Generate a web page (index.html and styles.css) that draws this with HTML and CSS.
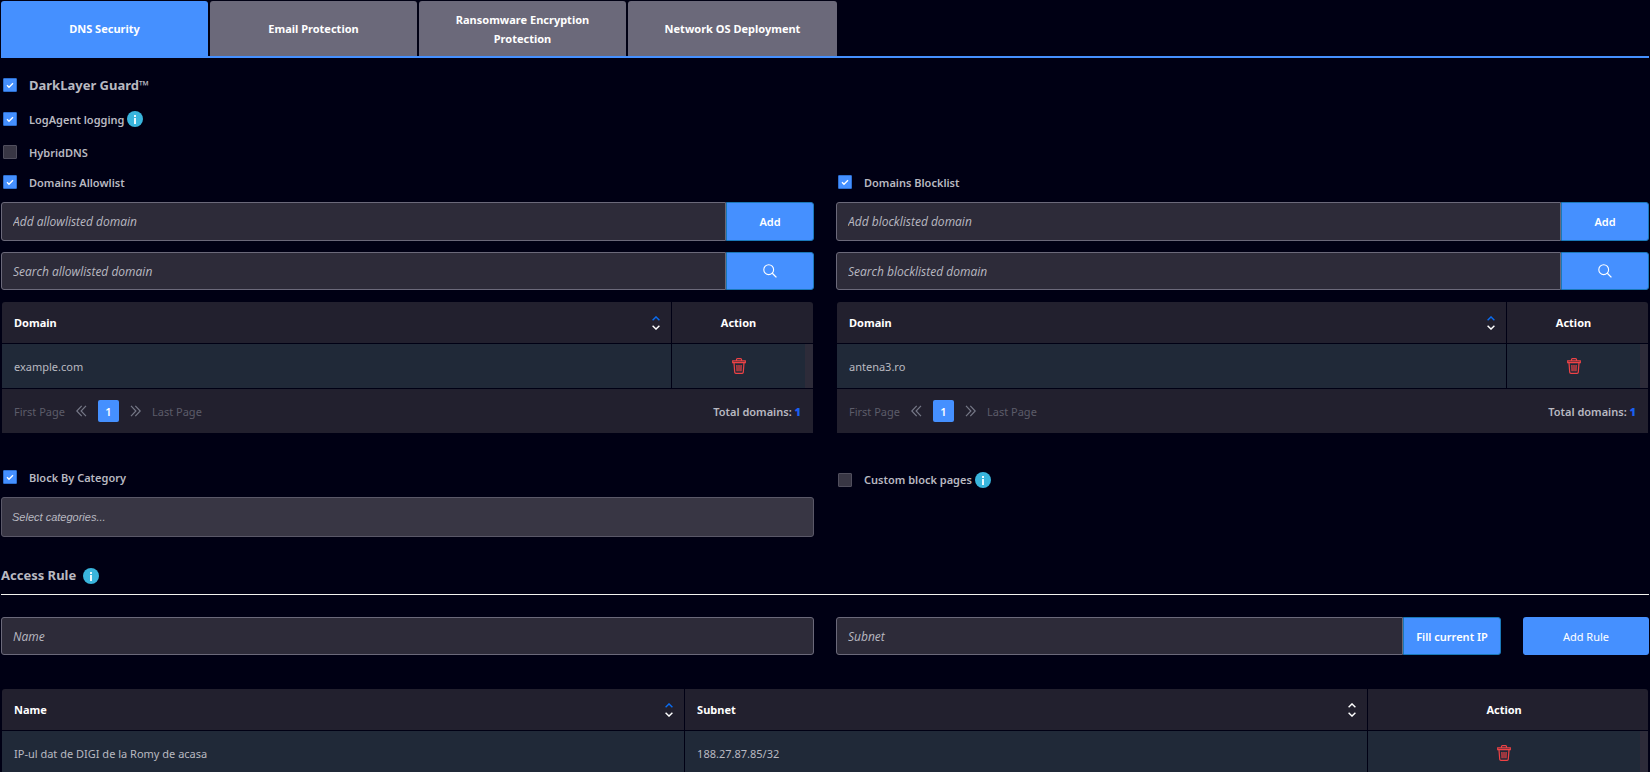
FILE: index.html
```html
<!DOCTYPE html>
<html lang="en">
<head>
    <meta charset="UTF-8">
    <meta name="viewport" content="width=device-width, initial-scale=1.0">
    <title>DNS Security</title>
    <link rel="stylesheet" href="styles.css">
</head>
<body>

    <!-- Shared icons -->
    <svg class="icon-defs" aria-hidden="true">
        <symbol id="icon-info" viewBox="0 0 16 16">
            <circle cx="8" cy="8" r="8" fill="#39b5dd"/>
            <path d="M7 4h2v2H7zM7 7h2v6H7z" fill="#e8f8fd"/>
        </symbol>
        <symbol id="icon-search" viewBox="0 0 14 14">
            <circle cx="5.7" cy="5.7" r="4.9" fill="none" stroke="#fff" stroke-width="1.1"/>
            <path d="M9.3 9.3l4.1 4.1" stroke="#fff" stroke-width="1.3"/>
        </symbol>
        <symbol id="icon-trash" viewBox="0 0 14 16">
            <path d="M4.5 2.8V1.6q0-.9.9-.9h3.2q.9 0 .9.9v1.2M.7 2.9h12.6v1.8H.7zM2 4.8l.7 9.3q.1 1.2 1.2 1.2h6.2q1.1 0 1.2-1.2l.7-9.3M4.9 7l.2 6.2M7 7v6.2M9.1 7l-.2 6.2" fill="none" stroke="#ef4245" stroke-width="1.2"/>
        </symbol>
        <symbol id="icon-prev" viewBox="0 0 11 12">
            <path d="M5.7.8L.8 6l4.9 5.2M10 .8L5.1 6l4.9 5.2" fill="none" stroke="#767887" stroke-width="1.2"/>
        </symbol>
        <symbol id="icon-next" viewBox="0 0 11 12">
            <path d="M1 .8L5.9 6 1 11.2M5.3.8l4.9 5.2-4.9 5.2" fill="none" stroke="#767887" stroke-width="1.2"/>
        </symbol>
        <symbol id="icon-sort" viewBox="0 0 8 14">
            <path class="sort-up" d="M.6 4.2L4 .9l3.4 3.3" fill="none" stroke="currentColor" stroke-width="1.4"/>
            <path d="M.6 9.8L4 13.1l3.4-3.3" fill="none" stroke="#fff" stroke-width="1.4"/>
        </symbol>
    </svg>

    <!-- Tabs -->
    <nav class="tabs">
        <button class="tab active" type="button">DNS Security</button>
        <button class="tab" type="button">Email Protection</button>
        <button class="tab" type="button">Ransomware Encryption Protection</button>
        <button class="tab" type="button">Network OS Deployment</button>
    </nav>

    <main>
        <!-- Main switches -->
        <div class="options">
            <div class="option option-title">
                <input type="checkbox" id="darklayer" checked>
                <label for="darklayer">DarkLayer Guard™</label>
            </div>
            <div class="option">
                <input type="checkbox" id="logagent" checked>
                <label for="logagent">LogAgent logging</label>
                <svg class="info"><use href="#icon-info"/></svg>
            </div>
            <div class="option">
                <input type="checkbox" id="hybriddns">
                <label for="hybriddns">HybridDNS</label>
            </div>
        </div>

        <!-- Allowlist and blocklist -->
        <div class="columns">
            <section>
                <div class="option">
                    <input type="checkbox" id="allowlist" checked>
                    <label for="allowlist">Domains Allowlist</label>
                </div>
                <div class="input-group input-add">
                    <input type="text" placeholder="Add allowlisted domain" aria-label="Add allowlisted domain">
                    <button type="button">Add</button>
                </div>
                <div class="input-group">
                    <input type="text" placeholder="Search allowlisted domain" aria-label="Search allowlisted domain">
                    <button type="button" aria-label="Search"><svg class="search"><use href="#icon-search"/></svg></button>
                </div>
                <div class="table-box">
                    <table class="domains">
                        <thead>
                            <tr>
                                <th><div class="sortable">Domain <svg class="sort sorted"><use href="#icon-sort"/></svg></div></th>
                                <th class="action">Action</th>
                            </tr>
                        </thead>
                        <tbody>
                            <tr>
                                <td>example.com</td>
                                <td class="action"><button class="delete" type="button" aria-label="Delete"><svg><use href="#icon-trash"/></svg></button></td>
                            </tr>
                        </tbody>
                    </table>
                    <div class="pager">
                        <button type="button">First Page</button>
                        <button type="button" aria-label="Previous"><svg><use href="#icon-prev"/></svg></button>
                        <button class="current" type="button">1</button>
                        <button type="button" aria-label="Next"><svg><use href="#icon-next"/></svg></button>
                        <button type="button">Last Page</button>
                        <span class="total">Total domains: <b>1</b></span>
                    </div>
                </div>
            </section>

            <section>
                <div class="option">
                    <input type="checkbox" id="blocklist" checked>
                    <label for="blocklist">Domains Blocklist</label>
                </div>
                <div class="input-group input-add">
                    <input type="text" placeholder="Add blocklisted domain" aria-label="Add blocklisted domain">
                    <button type="button">Add</button>
                </div>
                <div class="input-group">
                    <input type="text" placeholder="Search blocklisted domain" aria-label="Search blocklisted domain">
                    <button type="button" aria-label="Search"><svg class="search"><use href="#icon-search"/></svg></button>
                </div>
                <div class="table-box">
                    <table class="domains">
                        <thead>
                            <tr>
                                <th><div class="sortable">Domain <svg class="sort sorted"><use href="#icon-sort"/></svg></div></th>
                                <th class="action">Action</th>
                            </tr>
                        </thead>
                        <tbody>
                            <tr>
                                <td>antena3.ro</td>
                                <td class="action"><button class="delete" type="button" aria-label="Delete"><svg><use href="#icon-trash"/></svg></button></td>
                            </tr>
                        </tbody>
                    </table>
                    <div class="pager">
                        <button type="button">First Page</button>
                        <button type="button" aria-label="Previous"><svg><use href="#icon-prev"/></svg></button>
                        <button class="current" type="button">1</button>
                        <button type="button" aria-label="Next"><svg><use href="#icon-next"/></svg></button>
                        <button type="button">Last Page</button>
                        <span class="total">Total domains: <b>1</b></span>
                    </div>
                </div>
            </section>
        </div>

        <!-- Categories -->
        <div class="columns categories">
            <section>
                <div class="option">
                    <input type="checkbox" id="category" checked>
                    <label for="category">Block By Category</label>
                </div>
                <input class="category-select" type="text" role="combobox" aria-expanded="false" placeholder="Select categories..." aria-label="Select categories">
            </section>
            <section>
                <div class="option option-custom">
                    <input type="checkbox" id="custom">
                    <label for="custom">Custom block pages</label>
                    <svg class="info"><use href="#icon-info"/></svg>
                </div>
            </section>
        </div>

        <!-- Access rules -->
        <div class="section-title">
            <h2>Access Rule</h2>
            <svg class="info"><use href="#icon-info"/></svg>
        </div>
        <form class="columns rule-form">
            <input type="text" placeholder="Name" aria-label="Name">
            <div class="rule-subnet">
                <div class="input-group">
                    <input type="text" placeholder="Subnet" aria-label="Subnet">
                    <button class="fill-ip" type="button">Fill current IP</button>
                </div>
                <button class="add-rule" type="button">Add Rule</button>
            </div>
        </form>
        <div class="table-box">
            <table class="rules">
                <thead>
                    <tr>
                        <th><div class="sortable">Name <svg class="sort sorted"><use href="#icon-sort"/></svg></div></th>
                        <th><div class="sortable">Subnet <svg class="sort"><use href="#icon-sort"/></svg></div></th>
                        <th class="action">Action</th>
                    </tr>
                </thead>
                <tbody>
                    <tr>
                        <td>IP-ul dat de DIGI de la Romy de acasa</td>
                        <td>188.27.87.85/32</td>
                        <td class="action"><button class="delete" type="button" aria-label="Delete"><svg><use href="#icon-trash"/></svg></button></td>
                    </tr>
                </tbody>
            </table>
        </div>
    </main>

</body>
</html>
```
FILE: styles.css
```css
* {
    box-sizing: border-box;
}

body {
    margin: 0;
    padding: 1px;
    background-color: #000014;
    color: #b9b9c1;
    font-family: "Noto Sans", "Open Sans", sans-serif;
    font-size: 11px;
    line-height: 19px;
}

button,
input {
    font: inherit;
    color: inherit;
    margin: 0;
}

button {
    cursor: pointer;
    border: none;
    padding: 0;
}

svg {
    display: block;
}

.icon-defs {
    display: none;
}

/* Tabs */
.tabs {
    display: flex;
    gap: 2px;
    border-bottom: 2px solid #4590ff;
}

.tab {
    width: 207px;
    min-height: 55px;
    padding: 8px 24px;
    border-radius: 3px 3px 0 0;
    background-color: #6b697a;
    color: #fff;
    font-weight: 700;
}

.tab:last-child {
    width: 209px;
}

.tab.active {
    background-color: #4590ff;
}

/* Checkbox rows */
.options {
    display: flex;
    flex-direction: column;
    gap: 13px;
    padding: 17px 0 10px;
}

.option {
    display: flex;
    align-items: center;
    min-height: 20px;
    padding-left: 2px;
    font-weight: 600;
}

.option label {
    padding-left: 12px;
}

.option-title {
    margin-bottom: 1px;
    font-size: 13px;
    font-weight: 700;
}

.option input {
    appearance: none;
    width: 14px;
    height: 14px;
    border: 1px solid #504e5d;
    border-radius: 1px;
    background-color: #383644;
}

.option input:checked {
    border-color: #2d6fd0;
    background: #4590ff url("data:image/svg+xml,%3Csvg xmlns='http://www.w3.org/2000/svg' viewBox='0 0 12 12'%3E%3Cpath d='M3 6.2l2 2 4-4' fill='none' stroke='white' stroke-width='1.4'/%3E%3C/svg%3E") center / 12px no-repeat;
}

.info {
    width: 16px;
    height: 16px;
    margin-left: 3px;
}

.columns {
    display: grid;
    grid-template-columns: 1fr 1fr;
    gap: 22px;
}

/* Text inputs */
.input-group {
    display: flex;
    flex: 1;
    margin-bottom: 12px;
}

.input-add {
    margin: 10px 0 11px;
}

.input-group input,
.rule-form > input {
    flex: 1;
    min-width: 0;
    height: 38px;
    padding: 0 11px;
    border: 1px solid #6b697a;
    border-radius: 3px;
    background-color: #2d2b39;
    font-family: "Open Sans", "Noto Sans", sans-serif;
    font-size: 12px;
}

.input-group input {
    border-radius: 3px 0 0 3px;
}

.input-group button {
    display: flex;
    align-items: center;
    justify-content: center;
    width: 88px;
    border: 1px solid #1a78b8;
    border-radius: 0 3px 3px 0;
    background-color: #4590ff;
    color: #fff;
    font-weight: 600;
}

.input-group.input-add input {
    height: 39px;
}

input::placeholder {
    color: #b9b9c1;
    font-style: italic;
    opacity: 1;
}

.search {
    width: 14px;
    height: 14px;
}

/* Tables */
.table-box {
    margin: 0 1px;
    background-color: #22202e;
    border-radius: 3px 3px 0 0;
}

table {
    width: 100%;
    table-layout: fixed;
    border-collapse: separate;
    border-spacing: 0;
}

th,
td {
    height: 45px;
    padding: 0 11px 0 12px;
    border-bottom: 1px solid #000014;
    border-right: 1px solid #000014;
    text-align: left;
}

th {
    height: 42px;
    color: #fff;
    font-weight: 700;
}

td {
    background-color: #202938;
}

.action {
    padding: 0 8px 0 0;
    border-right: none;
    text-align: center;
}

/* scrollbar track beside the rows */
td.action {
    box-shadow: inset -8px 0 #2d2b39;
}

.domains .action {
    width: 141px;
}

.rules .action {
    width: 17%;
}

.sortable {
    display: flex;
    align-items: center;
    justify-content: space-between;
}

.sort {
    width: 8px;
    height: 14px;
    color: #fff;
}

.sort.sorted {
    color: #0a6cf0;
}

.delete {
    display: block;
    margin: 0 auto;
    background: none;
}

.delete svg {
    width: 14px;
    height: 16px;
}

/* Pagination */
.pager {
    display: flex;
    align-items: center;
    gap: 11px;
    height: 44px;
    padding: 0 12px;
}

.pager button {
    background: none;
    color: #5c5c69;
}

.pager svg {
    width: 11px;
    height: 12px;
}

.pager .current {
    width: 21px;
    height: 22px;
    border-radius: 2px;
    background-color: #4590ff;
    color: #fff;
    font-weight: 600;
}

.total {
    margin-left: auto;
    font-weight: 600;
}

.total b {
    color: #1a5ff0;
}

/* Categories */
.categories {
    margin-top: 34px;
}

.category-select {
    display: block;
    width: 100%;
    height: 40px;
    margin-top: 10px;
    padding: 0 10px;
    border: 1px solid #5a5868;
    border-radius: 3px;
    background-color: #383644;
    font-family: "Liberation Sans", Arial, sans-serif;
}

.option-custom {
    padding-top: 3px;
}

/* Access rules */
.section-title {
    display: flex;
    align-items: center;
    padding: 29px 0 9px;
    border-bottom: 1px solid #f2f2ee;
}

.section-title h2 {
    margin: 0 4px 0 0;
    font-size: 13px;
    font-weight: 700;
}

.rule-form {
    margin: 22px 0 34px;
}

.rule-form .input-group {
    margin: 0;
}

.rule-subnet {
    display: flex;
    gap: 22px;
}

.input-group .fill-ip {
    width: 98px;
}

.add-rule {
    width: 126px;
    border-radius: 3px;
    background-color: #4590ff;
    color: #fff;
}
```
